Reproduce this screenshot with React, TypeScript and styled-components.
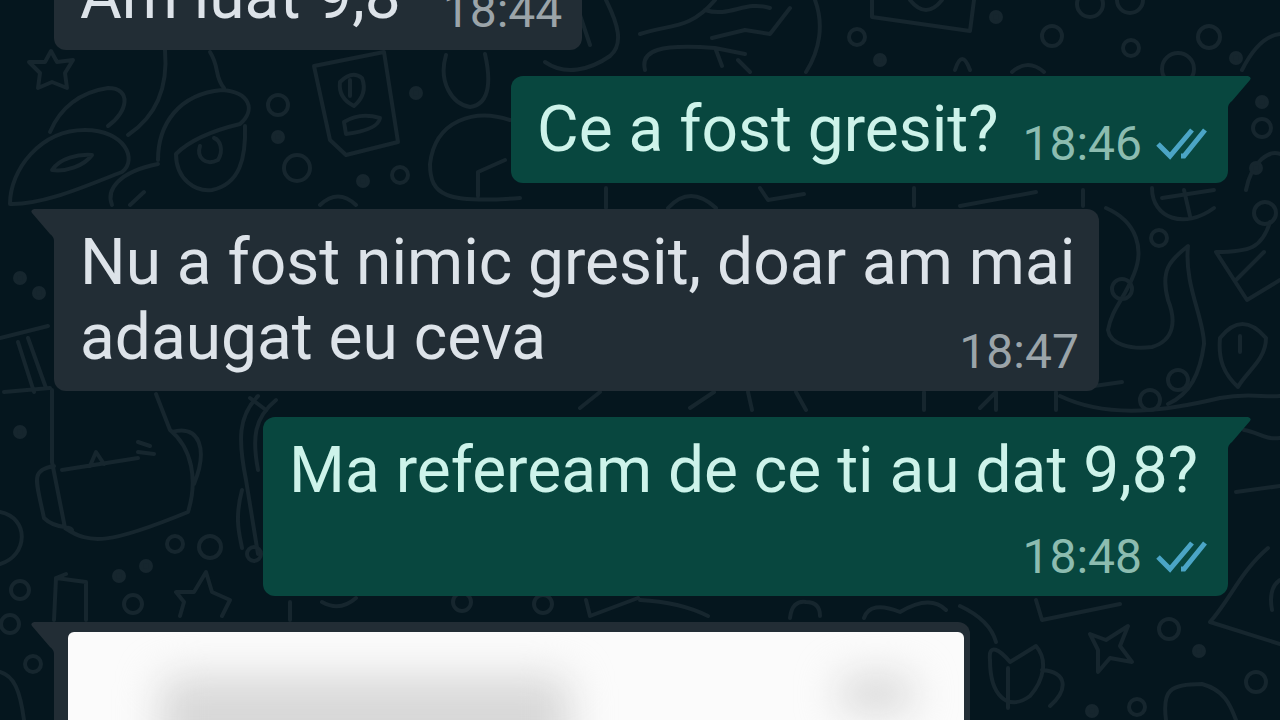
import React from "react";
import styled, { createGlobalStyle } from "styled-components";

const GlobalStyle = createGlobalStyle`
  *, *::before, *::after { box-sizing: border-box; }
  body {
    margin: 0;
    background: #05161e;
    font-family: Roboto, "Noto Sans", sans-serif;
  }
`;

type Side = "received" | "sent";
type MetaPlace = "beside" | "corner" | "below";

const fill = { received: "#222d35", sent: "#08473f" };
const ink = { received: "#dde3e9", sent: "#cdf3ea" };
const faint = { received: "#9ba4a9", sent: "#8cbcb0" };

const Screen = styled.main`
  position: relative;
  height: 100vh;
  overflow: hidden;
`;

const Wallpaper = styled.svg`
  position: absolute;
  inset: 0;
  width: 100%;
  height: 100%;
  fill: none;
  stroke: #16262e;
  stroke-width: 4;
  stroke-linecap: round;
  stroke-linejoin: round;
`;

const Thread = styled.ol`
  position: relative;
  display: flex;
  flex-direction: column;
  gap: 26px;
  margin: -57px 0 0;
  padding: 0 52px 0 54px;
  list-style: none;
`;

const Bubble = styled.li<{ $side: Side; $meta: MetaPlace }>`
  position: relative;
  display: grid;
  grid-template-columns: ${(p) => (p.$meta === "beside" ? "auto auto" : "auto")};
  column-gap: ${(p) => (p.$side === "sent" ? 24 : 42)}px;
  align-self: ${(p) => (p.$side === "sent" ? "flex-end" : "flex-start")};
  max-width: 89%;
  padding: 16px 20px 16px 26px;
  border-radius: 12px;
  border-top-${(p) => (p.$side === "sent" ? "right" : "left")}-radius: 0;
  background: ${(p) => fill[p.$side]};
  color: ${(p) => ink[p.$side]};
`;

const Tail = styled.svg<{ $side: Side }>`
  position: absolute;
  top: 0;
  ${(p) => (p.$side === "sent" ? "left" : "right")}: 100%;
  width: 23px;
  height: 32px;
  fill: ${(p) => fill[p.$side]};
`;

const Words = styled.p<{ $meta: MetaPlace }>`
  margin: 0;
  padding-right: ${(p) => (p.$meta === "below" ? 10 : 0)}px;
  font-size: 64px;
  line-height: 75px;
`;

const Meta = styled.span<{ $side: Side; $meta: MetaPlace }>`
  display: flex;
  align-items: center;
  gap: 14px;
  align-self: end;
  justify-self: end;
  float: right;
  margin-top: ${(p) => ({ beside: 0, corner: 29, below: 26 })[p.$meta]}px;
  color: ${(p) => faint[p.$side]};
  font-size: 48px;
  line-height: 46px;
`;

const Ticks = styled.svg`
  width: 52px;
  height: 34px;
  fill: none;
  stroke: #4ba5c6;
  stroke-width: 5;
`;

const PhotoBubble = styled.li`
  position: relative;
  width: 78%;
  padding: 10px 6px 10px 14px;
  border-radius: 0 12px 12px 12px;
  background: ${fill.received};
`;

const Photo = styled.div`
  display: flex;
  justify-content: space-between;
  height: 280px;
  padding: 44px 50px 0 92px;
  border-radius: 6px;
  background: #fbfbfb;
  overflow: hidden;
`;

const Smudge = styled.div<{ $wide?: boolean }>`
  width: ${(p) => (p.$wide ? 410 : 76)}px;
  height: ${(p) => (p.$wide ? 90 : 36)}px;
  border-radius: 16px;
  background: ${(p) => (p.$wide ? "#d8d8d8" : "#d6d6d6")};
  filter: blur(20px);
`;

function BubbleTail({ side }: { side: Side }) {
  return (
    <Tail $side={side} viewBox="0 0 23 32" aria-hidden="true">
      <path d={side === "sent" ? "M0 0H20Q24 1 22 4L4 25Q0 28 0 32Z" : "M23 0H3Q-1 1 1 4L19 25Q23 28 23 32Z"} />
    </Tail>
  );
}

interface MessageProps {
  side: Side;
  meta: MetaPlace;
  time: string;
  children: React.ReactNode;
}

function Message({ side, meta, time, children }: MessageProps) {
  const stamp = (
    <Meta $side={side} $meta={meta}>
      <time>{time}</time>
      {side === "sent" && (
        <Ticks viewBox="0 0 52 34" role="img" aria-label="Read">
          <path d="M2 17L14 29L36 3M25 29H28L49 3" />
        </Ticks>
      )}
    </Meta>
  );

  return (
    <Bubble $side={side} $meta={meta}>
      <BubbleTail side={side} />
      <Words $meta={meta}>
        {children}
        {meta === "corner" && stamp}
      </Words>
      {meta !== "corner" && stamp}
    </Bubble>
  );
}

const rings: [number, number, number][] = [
  [278, 105, 10], [297, 168, 13], [400, 175, 8], [857, 37, 8], [1052, 36, 10],
  [1131, 48, 8], [1209, 37, 11], [1090, 4, 13], [1130, 0, 13], [1178, 69, 16],
  [1159, 238, 8], [1265, 213, 11], [1122, 289, 10], [1178, 380, 10], [1150, 400, 10],
  [20, 590, 9], [10, 624, 9], [33, 664, 8], [210, 547, 11], [133, 604, 9],
  [254, 554, 7], [175, 544, 8], [1169, 629, 10], [1256, 682, 10], [1137, 707, 8],
  [462, 602, 9], [543, 604, 9], [1262, 128, 9],
];

const dots: [number, number][] = [
  [278, 137], [416, 93], [363, 181], [996, 17], [880, 60], [1236, 58], [20, 432],
  [119, 576], [146, 566], [1199, 651], [1092, 711], [20, 278], [39, 293], [1262, 102], [1256, 168],
];

const strokes = [
  "M51 51L57 62L73 60L65 73L67 88L52 82L38 88L40 73L29 62L45 62Z",
  "M165 50C168 85 158 115 128 135M10 204C10 170 40 130 85 130C125 130 138 160 122 172C90 184 45 205 10 204ZM50 132C60 108 80 92 108 88C132 88 128 112 108 126M52 170C60 158 78 154 92 155C84 166 66 172 52 170ZM112 205C106 190 118 172 158 164",
  "M210 52C220 68 214 76 224 88M158 160C158 125 178 94 222 90C250 92 256 110 240 124C215 130 190 140 176 154C176 180 196 192 212 190C240 184 246 158 245 126M200 146C196 158 206 166 218 160C224 150 220 140 214 138",
  "M314 66L384 52L398 142L346 155L330 140ZM340 82Q352 70 362 78Q368 94 354 106Q338 98 340 82ZM350 80V96M344 122Q360 112 380 118Q378 130 346 134Z",
  "M446 55C438 82 452 104 470 107C492 104 490 76 485 54M510 120C475 108 435 120 430 164C430 195 445 204 520 198M478 172V196M478 172L505 160",
  "M606 0C618 24 624 44 610 56C590 70 565 76 545 62M575 0L590 45",
  "M640 34C670 24 690 30 715 0M645 70C640 50 660 44 715 48L745 54M705 10C730 18 745 0 770 8M712 38L745 30L770 34L790 8M815 0C824 24 820 50 806 72M738 60L750 72M716 50L722 66",
  "M872 0V17L970 31L974 0M910 0Q926 20 942 0M955 70Q962 48 970 70M1012 72Q1028 58 1044 72",
  "M320 205Q338 188 356 205M668 208Q690 184 716 208M760 188L768 200L804 194M914 188V206M960 206L1036 192M1083 190V206M606 188V208",
  "M1152 188C1152 218 1184 230 1214 208M1162 198L1214 190M1184 190L1190 216",
  "M1106 208C1138 222 1144 250 1134 274C1124 300 1112 308 1108 330C1110 344 1130 350 1152 347C1175 340 1176 320 1168 300C1160 270 1170 260 1188 246C1184 285 1204 318 1204 344C1200 374 1190 394 1168 404",
  "M1216 252L1247 300L1280 280M1216 252C1250 252 1262 248 1270 222M1236 280L1264 252M1220 338Q1242 310 1266 338C1266 360 1246 372 1238 387C1224 374 1218 360 1220 338ZM1240 336V352",
  "M1094 386L1122 382M1060 396C1110 420 1170 410 1220 398C1250 392 1264 398 1280 396M1244 430C1258 432 1264 440 1280 438M1236 492L1280 486",
  "M0 338L48 326M18 342L34 392M28 338L46 388M4 392L50 388",
  "M52 390V462L65 528C90 545 110 544 188 512C198 480 192 448 170 430L156 394M54 466C30 470 36 480 44 518C56 530 70 525 72 530M62 470L138 458M90 466L96 452L104 464M138 442L150 446M138 452L154 454M172 432C200 424 208 450 194 484",
  "M258 396C238 416 238 440 246 480L258 554M276 400C254 418 252 438 258 470M242 490C234 520 240 536 242 548",
  "M0 512C30 518 28 556 0 564M54 620L56 578L86 582V620M56 578L66 574",
  "M180 616L184 602L176 592L194 592L206 572L212 592L230 600L222 616M290 602V620M322 602Q340 612 356 598M586 600L590 616L638 598",
  "M640 600Q680 602 708 616M790 618Q792 600 806 602Q820 602 820 616M864 618Q870 600 900 612Q930 594 946 610",
  "M960 606Q990 620 996 642M1036 600L1042 620L1120 604M1090 634L1106 640L1128 626L1120 646L1132 662L1110 658L1098 672V650Z",
  "M990 660C988 642 1000 650 1010 662L1036 646C1048 660 1044 680 1030 696C1008 712 990 696 990 660ZM1042 670C1068 672 1068 690 1050 706M1008 668V708",
  "M1210 622C1230 600 1240 572 1268 548M1210 622L1280 644M1280 580Q1268 588 1272 610M1166 720C1162 690 1170 684 1202 684C1224 690 1230 704 1236 720M0 672C14 676 20 690 24 720",
  "M1246 190C1252 160 1270 150 1280 154M1242 70C1250 54 1262 36 1280 34",
  "M600 392L580 408M690 408L714 392M748 392L752 410M796 392L806 410M924 392V410M980 408L996 392V410M1056 392V410M130 205L144 192M250 398L266 410",
];

function Doodles() {
  return (
    <Wallpaper viewBox="0 0 1280 720" preserveAspectRatio="xMidYMid slice" aria-hidden="true">
      {strokes.map((d) => <path key={d} d={d} />)}
      {rings.map(([x, y, r]) => <circle key={`${x}-${y}`} cx={x} cy={y} r={r} />)}
      {dots.map(([x, y]) => <circle key={`${x}-${y}`} cx={x} cy={y} r="5" fill="#16262e" />)}
    </Wallpaper>
  );
}

export default function App() {
  return (
    <Screen>
      <GlobalStyle />
      <Doodles />
      <Thread>
        <Message side="received" meta="beside" time="18:44">Am luat 9,8</Message>
        <Message side="sent" meta="beside" time="18:46">Ce a fost gresit?</Message>
        <Message side="received" meta="corner" time="18:47">
          Nu a fost nimic gresit, doar am mai adaugat eu ceva
        </Message>
        <Message side="sent" meta="below" time="18:48">Ma refeream de ce ti au dat 9,8?</Message>
        <PhotoBubble>
          <BubbleTail side="received" />
          <Photo role="img" aria-label="Blurred photo">
            <Smudge $wide />
            <Smudge />
          </Photo>
        </PhotoBubble>
      </Thread>
    </Screen>
  );
}
